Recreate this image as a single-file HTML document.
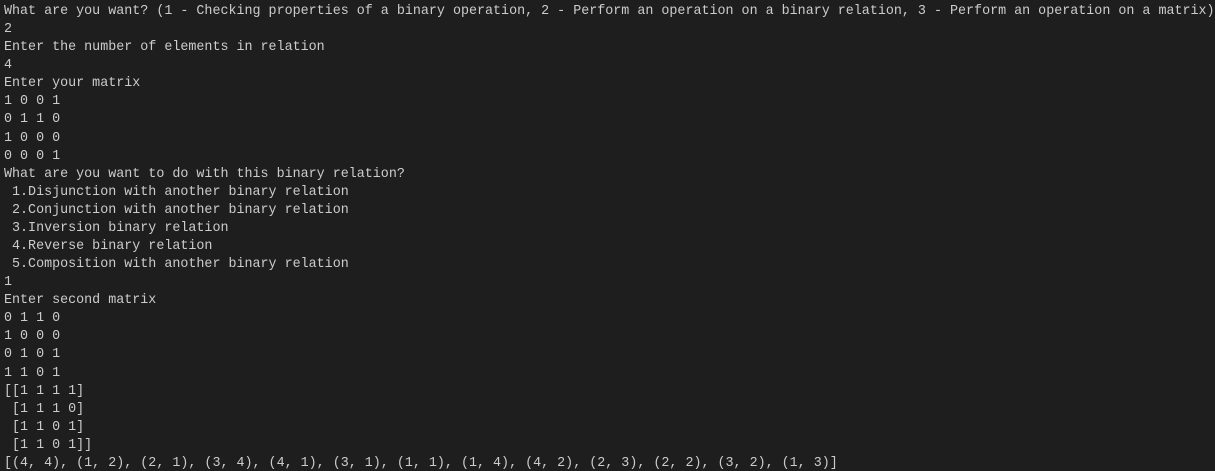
<!DOCTYPE html>
<html><head><meta charset="utf-8"><style>
html,body{margin:0;padding:0;background:#1e1e1e;width:1215px;height:471px;overflow:hidden}
pre{margin:0;padding:3px 0 0 4px;font-family:"Liberation Mono",monospace;font-size:13.36px;line-height:18.08px;color:#cccccc;white-space:pre}
</style></head><body><pre>What are you want? (1 - Checking properties of a binary operation, 2 - Perform an operation on a binary relation, 3 - Perform an operation on a matrix)
2
Enter the number of elements in relation
4
Enter your matrix
1 0 0 1
0 1 1 0
1 0 0 0
0 0 0 1
What are you want to do with this binary relation?
 1.Disjunction with another binary relation
 2.Conjunction with another binary relation
 3.Inversion binary relation
 4.Reverse binary relation
 5.Composition with another binary relation
1
Enter second matrix
0 1 1 0
1 0 0 0
0 1 0 1
1 1 0 1
[[1 1 1 1]
 [1 1 1 0]
 [1 1 0 1]
 [1 1 0 1]]
[(4, 4), (1, 2), (2, 1), (3, 4), (4, 1), (3, 1), (1, 1), (1, 4), (4, 2), (2, 3), (2, 2), (3, 2), (1, 3)]</pre></body></html>
